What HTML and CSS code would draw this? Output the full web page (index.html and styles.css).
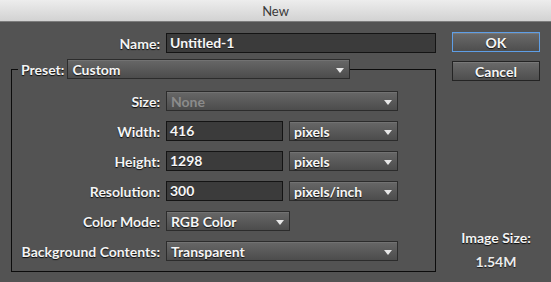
FILE: index.html
```html
<!DOCTYPE html>
<html lang="en">
<head>
    <meta charset="UTF-8">
    <title>New</title>
    <link rel="stylesheet" href="styles.css">
</head>
<body>
    <div class="titlebar">New</div>

    <div class="dialog">
        <div class="form">
            <div class="name-row">
                <span class="label">Name:</span>
                <div class="field field-name">Untitled-1</div>
            </div>

            <fieldset class="group">
                <legend class="preset">
                    <span class="label">Preset:</span>
                    <div class="select select-preset"><span class="value">Custom</span><span class="arrow"></span></div>
                </legend>

                <div class="rows">
                    <span class="label">Size:</span>
                    <div class="select select-wide disabled"><span class="value">None</span><span class="arrow"></span></div>

                    <span class="label">Width:</span>
                    <div class="pair">
                        <div class="field field-num">416</div>
                        <div class="select select-unit"><span class="value">pixels</span><span class="arrow"></span></div>
                    </div>

                    <span class="label">Height:</span>
                    <div class="pair">
                        <div class="field field-num">1298</div>
                        <div class="select select-unit"><span class="value">pixels</span><span class="arrow"></span></div>
                    </div>

                    <span class="label">Resolution:</span>
                    <div class="pair">
                        <div class="field field-num">300</div>
                        <div class="select select-unit"><span class="value">pixels/inch</span><span class="arrow"></span></div>
                    </div>

                    <span class="label">Color Mode:</span>
                    <div class="select select-mode"><span class="value">RGB Color</span><span class="arrow"></span></div>

                    <span class="label">Background Contents:</span>
                    <div class="select select-wide"><span class="value">Transparent</span><span class="arrow"></span></div>
                </div>
            </fieldset>
        </div>

        <div class="side">
            <button class="btn btn-default">OK</button>
            <button class="btn">Cancel</button>

            <div class="image-size">
                <div class="label">Image Size:</div>
                <div class="size-value">1.54M</div>
            </div>
        </div>
    </div>
</body>
</html>
```

FILE: styles.css
```css
body {
    margin: 0;
    background: #535353;
    font-family: 'Lato', 'Liberation Sans', sans-serif;
    font-size: 14px;
    color: #f2f2f2;
    overflow: hidden;
}

.titlebar {
    height: 21px;
    line-height: 22px;
    text-align: center;
    color: #3a3a3a;
    font-size: 13px;
    background: linear-gradient(#ededed, #d2d2d2);
    border-bottom: 1px solid #7c7c7c;
}

.dialog {
    display: flex;
    padding-top: 11px;
}

.form {
    width: 436px;
}

.label {
    font-weight: bold;
    color: #f4f4f4;
    text-shadow: 0 1px 1px rgba(0, 0, 0, 0.9);
    white-space: nowrap;
}

.name-row {
    display: grid;
    grid-template-columns: 160px 270px;
    column-gap: 6px;
    align-items: center;
}

.name-row .label {
    text-align: right;
}

/* text fields */
.field {
    box-sizing: border-box;
    height: 20px;
    line-height: 18px;
    padding: 0 3px;
    background: #3b3b3b;
    border: 1px solid #141414;
    font-weight: bold;
    color: #f6f6f6;
    text-shadow: 0 1px 0 rgba(0, 0, 0, 0.6);
}

.field-num {
    width: 117px;
}

/* dropdowns */
.select {
    box-sizing: border-box;
    display: flex;
    align-items: center;
    height: 20px;
    padding: 0 5px 0 4px;
    background: linear-gradient(#676767, #4c4c4c);
    border: 1px solid #2c2c2c;
    box-shadow: inset 0 1px 0 rgba(255, 255, 255, 0.08);
    font-weight: bold;
    color: #f6f6f6;
    text-shadow: 0 1px 1px rgba(0, 0, 0, 0.8);
}

.select .value {
    flex: 1;
    white-space: nowrap;
}

.select .arrow {
    width: 0;
    height: 0;
    border-left: 4px solid transparent;
    border-right: 4px solid transparent;
    border-top: 5px solid #e8e8e8;
    margin-top: 2px;
}

.select.disabled .value {
    color: #8b8b8b;
    text-shadow: none;
}

.select-preset { width: 283px; }
.select-wide { width: 232px; }
.select-unit { width: 109px; }
.select-mode { width: 124px; }

/* preset group */
.group {
    box-sizing: border-box;
    width: 425px;
    margin: 6px 0 0 11px;
    padding: 12px 0 10px 0;
    border: 1px solid #0c0c0c;
}

.preset {
    display: flex;
    align-items: center;
    gap: 3px;
    margin-left: 6px;
    padding: 0 0 0 3px;
}

.rows {
    display: grid;
    grid-template-columns: 148px auto;
    column-gap: 6px;
    row-gap: 10px;
    align-items: center;
}

.rows .label {
    text-align: right;
}

.pair {
    display: flex;
    gap: 6px;
}

/* buttons column */
.side {
    display: flex;
    flex-direction: column;
    width: 88px;
    margin-left: 16px;
    margin-top: -1px;
}

.btn {
    box-sizing: border-box;
    height: 20px;
    padding: 0;
    font-family: inherit;
    font-size: 14px;
    font-weight: bold;
    color: #f6f6f6;
    text-shadow: 0 1px 1px rgba(0, 0, 0, 0.8);
    background: linear-gradient(#6a6a6a, #4e4e4e);
    border: 1px solid #242424;
    box-shadow: inset 0 1px 0 rgba(255, 255, 255, 0.1);
}

.btn + .btn {
    margin-top: 9px;
}

.btn-default {
    border-color: #5e9ee6;
}

.image-size {
    margin-top: 149px;
    text-align: center;
    line-height: 16px;
}

.size-value {
    margin-top: 8px;
    font-weight: bold;
    color: #ececec;
    text-shadow: 0 1px 1px rgba(0, 0, 0, 0.7);
}
```
